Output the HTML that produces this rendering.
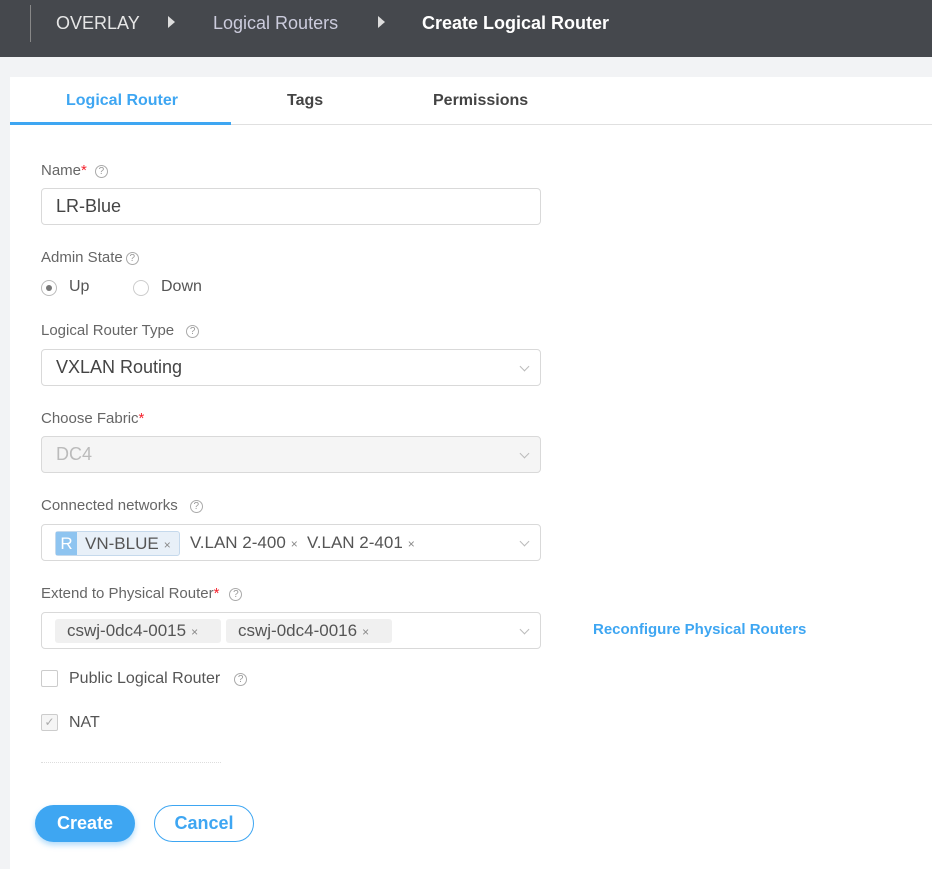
<!DOCTYPE html>
<html><head><style>
*{margin:0;padding:0;box-sizing:border-box}
body{width:932px;height:869px;background:#f2f3f5;font-family:"Liberation Sans",sans-serif;position:relative;overflow:hidden;color:#555}
.a{position:absolute}
.hdr{left:0;top:0;width:932px;height:57px;background:#45484d}
.panel{left:10px;top:77px;width:922px;height:792px;background:#fff}
.lbl{font-size:15px;color:#666;left:41px}
.req{color:#f5222d}
.q{display:inline-block;width:13px;height:13px;border:1px solid #aaa;border-radius:50%;font-size:10px;line-height:11px;text-align:center;color:#999;vertical-align:1px;margin-left:8px}
.inp{left:41px;width:500px;height:37px;border:1px solid #d9d9d9;border-radius:4px;font-size:18px;color:#444;padding:0 14px;line-height:35px}
.chev{position:absolute;right:12px;top:13px;width:7px;height:7px;border-right:1px solid #bbb;border-bottom:1px solid #bbb;transform:rotate(45deg)}
.tag{position:absolute;top:6px;height:24px;background:#f0f0f0;border-radius:3px;font-size:17px;line-height:24px;color:#555;padding:0 8px 0 12px;white-space:nowrap}
.x{font-size:12px;color:#888;margin-left:5px}
</style></head><body>
<div class="a hdr">
<div class="a" style="left:30px;top:5px;width:1px;height:37px;background:#888"></div>
<div class="a" style="left:56px;top:13px;font-size:18px;color:#e6e6e6">OVERLAY</div>
<div class="a" style="left:168px;top:16px;border-left:7px solid #ddd;border-top:6px solid transparent;border-bottom:6px solid transparent"></div>
<div class="a" style="left:213px;top:13px;font-size:18px;color:#ccd">Logical Routers</div>
<div class="a" style="left:378px;top:16px;border-left:7px solid #ddd;border-top:6px solid transparent;border-bottom:6px solid transparent"></div>
<div class="a" style="left:422px;top:13px;font-size:18px;color:#fff;font-weight:bold">Create Logical Router</div>
</div>
<div class="a panel"></div>
<div class="a" style="left:10px;top:124px;width:922px;height:1px;background:#e0e0e0"></div>
<div class="a" style="left:10px;top:122px;width:221px;height:3px;background:#3ea6f2"></div>
<div class="a" style="left:66px;top:92px;font-size:16px;color:#3ea6f2;font-weight:bold">Logical Router</div>
<div class="a" style="left:287px;top:92px;font-size:16px;color:#444;font-weight:bold">Tags</div>
<div class="a" style="left:433px;top:92px;font-size:16px;color:#444;font-weight:bold">Permissions</div>

<div class="a lbl" style="top:162px">Name<span class="req">*</span><span class="q">?</span></div>
<div class="a inp" style="top:188px">LR-Blue</div>
<div class="a lbl" style="top:249px">Admin State<span class="q" style="margin-left:3px">?</span></div>
<div class="a" style="left:41px;top:280px;width:16px;height:16px;border:1px solid #bbb;border-radius:50%"><div class="a" style="left:4px;top:4px;width:6px;height:6px;border-radius:50%;background:#777"></div></div>
<div class="a" style="left:69px;top:278px;font-size:16px;color:#555">Up</div>
<div class="a" style="left:133px;top:280px;width:16px;height:16px;border:1px solid #ccc;border-radius:50%"></div>
<div class="a" style="left:161px;top:278px;font-size:16px;color:#555">Down</div>
<div class="a lbl" style="top:322px">Logical Router Type<span class="q" style="margin-left:12px">?</span></div>
<div class="a inp" style="top:349px">VXLAN Routing<div class="chev"></div></div>
<div class="a lbl" style="top:410px">Choose Fabric<span class="req">*</span></div>
<div class="a inp" style="top:436px;background:#f5f5f5;color:#bbb">DC4<div class="chev"></div></div>
<div class="a lbl" style="top:497px">Connected networks<span class="q" style="margin-left:12px">?</span></div>
<div class="a inp" style="top:524px;padding:0">
<div class="tag" style="left:13px;padding:0 8px 0 0;background:#e8f0f8;border:1px solid #c5d9ec;height:25px;line-height:23px"><span style="display:inline-block;background:#8ec4f0;color:#fff;width:21px;text-align:center;margin-right:8px">R</span>VN-BLUE<span class="x">×</span></div>
<div class="tag" style="left:148px;padding:0 4px 0 0;background:#fff">V.LAN 2-400<span class="x">×</span></div>
<div class="tag" style="left:265px;padding:0 4px 0 0;background:#fff">V.LAN 2-401<span class="x">×</span></div>
<div class="chev"></div></div>
<div class="a lbl" style="top:585px">Extend to Physical Router<span class="req">*</span><span class="q" style="margin-left:10px">?</span></div>
<div class="a inp" style="top:612px;padding:0">
<div class="tag" style="left:13px;width:166px">cswj-0dc4-0015<span class="x">×</span></div>
<div class="tag" style="left:184px;width:166px">cswj-0dc4-0016<span class="x">×</span></div>
<div class="chev"></div></div>
<div class="a" style="left:593px;top:621px;font-size:15px;color:#3ea6f2;font-weight:bold">Reconfigure Physical Routers</div>
<div class="a" style="left:41px;top:670px;width:17px;height:17px;border:1px solid #ccc;border-radius:2px"></div>
<div class="a" style="left:69px;top:670px;font-size:16px;color:#555">Public Logical Router<span class="q" style="margin-left:14px">?</span></div>
<div class="a" style="left:41px;top:714px;width:17px;height:17px;border:1px solid #ccc;border-radius:2px;background:#f5f5f5;color:#aaa;font-size:12px;text-align:center;line-height:15px">✓</div>
<div class="a" style="left:69px;top:714px;font-size:16px;color:#555">NAT</div>
<div class="a" style="left:41px;top:762px;width:180px;height:3px;border-top:1px dotted #ddd"></div>
<div class="a" style="left:35px;top:805px;width:100px;height:37px;border-radius:19px;background:#3ea6f2;color:#fff;font-size:18px;font-weight:bold;text-align:center;line-height:37px;box-shadow:0 3px 6px rgba(62,166,242,.4)">Create</div>
<div class="a" style="left:154px;top:805px;width:100px;height:37px;border-radius:19px;border:1px solid #3ea6f2;color:#3ea6f2;font-size:18px;font-weight:bold;text-align:center;line-height:35px">Cancel</div>
</body></html>
